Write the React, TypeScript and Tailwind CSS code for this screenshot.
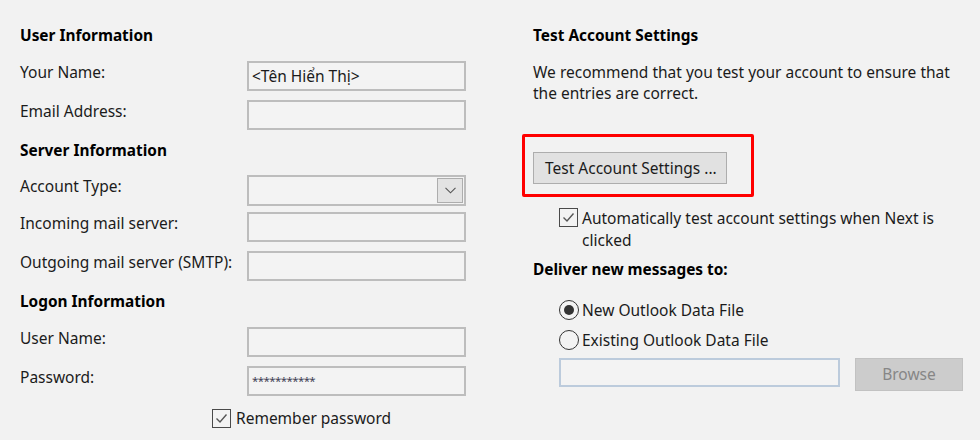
import type { ReactNode } from "react";

const FONT = { fontFamily: '"Noto Sans", "Open Sans", sans-serif' };

function Heading({ children, className = "" }: { children: ReactNode; className?: string }) {
  return <div className={`h-[20px] text-[15.4px] font-bold leading-[20px] text-black ${className}`}>{children}</div>;
}

function Field({ label, value, mt, h = "h-[30px]", children }: { label: string; value?: ReactNode; mt: string; h?: string; children?: ReactNode }) {
  return (
    <div className={`flex items-start ${mt}`}>
      <div className="w-[227px] pt-[1px] text-[15.5px] leading-[20px]">{label}</div>
      <div className={`relative flex w-[219px] items-center border-2 border-[#bdbdbd] bg-[#f3f3f3] pl-[3px] ${h}`}>
        {value}
        {children}
      </div>
    </div>
  );
}

function CheckBox() {
  return (
    <span className="flex h-[19px] w-[19px] shrink-0 items-center justify-center border border-[#4a4a4a] bg-[#f3f3f3]">
      <svg width="15" height="15" viewBox="0 0 15 15" fill="none">
        <path d="M2.5 7.5 L6 11 L12.5 3.5" stroke="#555" strokeWidth="1.4" />
      </svg>
    </span>
  );
}

function Radio({ checked }: { checked?: boolean }) {
  return (
    <span className="flex h-[20px] w-[20px] shrink-0 items-center justify-center rounded-full border-[1.5px] border-[#333] bg-[#f3f3f3]">
      {checked && <span className="h-[10px] w-[10px] rounded-full bg-[#333]" />}
    </span>
  );
}

export default function App() {
  return (
    <div className="flex h-[440px] w-[980px] bg-[#f2f2f2] text-[#1b1b1b]" style={FONT}>
      {/* left column */}
      <div className="flex w-[466px] flex-col pl-[20px] pt-[26px]">
        <Heading>User Information</Heading>
        <Field label="Your Name:" mt="mt-[15px]" value={<span className="text-[15.5px] leading-[20px]">&lt;Tên Hiển Thị&gt;</span>} />
        <Field label="Email Address:" mt="mt-[9px]" />

        <Heading className="mt-[11px]">Server Information</Heading>
        <Field label="Account Type:" mt="mt-[14px]" h="h-[31px]">
          <div className="absolute right-[1px] top-[1px] flex h-[25px] w-[26px] items-center justify-center border border-[#adadad] bg-[#e3e3e3]">
            <svg width="11" height="7" viewBox="0 0 11 7" fill="none">
              <path d="M0.5 0.8 L5.5 5.8 L10.5 0.8" stroke="#555" strokeWidth="1.1" />
            </svg>
          </div>
        </Field>
        <Field label="Incoming mail server:" mt="mt-[6px]" />
        <Field label="Outgoing mail server (SMTP):" mt="mt-[9px]" />

        <Heading className="mt-[11px]">Logon Information</Heading>
        <Field label="User Name:" mt="mt-[15px]" />
        <Field
          label="Password:"
          mt="mt-[9px]"
          value={<span className="text-[11.5px] leading-[12px] tracking-[-0.6px] text-[#3f3f55]">***********</span>}
        />

        <div className="mt-[12px] flex items-center gap-[5px] pl-[192px]">
          <CheckBox />
          <span className="text-[15.5px] leading-[20px]">Remember password</span>
        </div>
      </div>

      {/* right column */}
      <div className="ml-[67px] flex flex-col pt-[26px]">
        <Heading>Test Account Settings</Heading>
        <p className="mt-[16px] text-[15.5px] leading-[21px]">
          We recommend that you test your account to ensure that
          <br />
          the entries are correct.
        </p>

        <div className="-ml-[11px] mt-[30px] w-[232px] rounded-[2px] border-[3px] border-[#ff0000] pb-[10px] pl-[8px] pt-[15px]">
          <button className="flex h-[32px] w-[194px] items-center border border-[#adadad] bg-[#e1e1e1] pl-[11px] text-[15.5px] leading-[20px]">
            Test Account Settings ...
          </button>
        </div>

        <div className="mt-[11px] flex items-start gap-[4px] pl-[26px]">
          <CheckBox />
          <span className="-mt-[1px] text-[15.5px] leading-[22px]">
            Automatically test account settings when Next is
            <br />
            clicked
          </span>
        </div>

        <Heading className="mt-[9px]">Deliver new messages to:</Heading>

        <div className="mt-[20px] flex items-center gap-[3px] pl-[26px]">
          <Radio checked />
          <span className="text-[15.5px] leading-[20px]">New Outlook Data File</span>
        </div>
        <div className="mt-[10px] flex items-center gap-[3px] pl-[26px]">
          <Radio />
          <span className="text-[15.5px] leading-[20px]">Existing Outlook Data File</span>
        </div>

        <div className="mt-[8px] flex items-start pl-[26px]">
          <div className="h-[29px] w-[281px] border-2 border-[#bccbdc] bg-[#f3f3f3]" />
          <button className="ml-[15px] flex h-[33px] w-[108px] items-center justify-center border border-[#c2c2c2] bg-[#cccccc] text-[15.5px] text-[#868686]">
            Browse
          </button>
        </div>
      </div>
    </div>
  );
}
